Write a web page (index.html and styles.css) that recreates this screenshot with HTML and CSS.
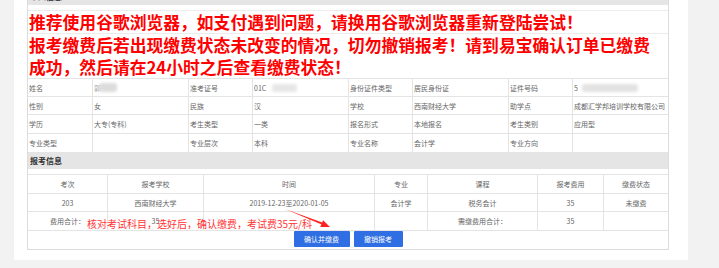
FILE: index.html
```html
<!DOCTYPE html>
<html lang="zh-CN">
<head>
<meta charset="utf-8">
<title>报考信息</title>
<link rel="stylesheet" href="styles.css">
</head>
<body>
<div class="card">
  <div class="box">
    <div class="bar bar--gap">个人信息</div>
    <div class="notice">
      <div class="notice-row notice-row--single">推荐使用谷歌浏览器，如支付遇到问题，请换用谷歌浏览器重新登陆尝试！</div>
      <div class="notice-row notice-row--double">报考缴费后若出现缴费状态未改变的情况，切勿撤销报考！请到易宝确认订单已缴费成功，然后请在24小时之后查看缴费状态！</div>
    </div>
    <div class="info">
      <div class="cell">姓名</div>
      <div class="cell"><span class="faint">郭</span><span class="blur blur--name"></span></div>
      <div class="cell">准考证号</div>
      <div class="cell">01C<span class="blur blur--ticket"></span></div>
      <div class="cell">身份证件类型</div>
      <div class="cell">居民身份证</div>
      <div class="cell">证件号码</div>
      <div class="cell">5<span class="blur blur--id"></span></div>

      <div class="cell">性别</div>
      <div class="cell">女</div>
      <div class="cell">民族</div>
      <div class="cell">汉</div>
      <div class="cell">学校</div>
      <div class="cell">西南财经大学</div>
      <div class="cell">助学点</div>
      <div class="cell">成都汇学邦培训学校有限公司</div>

      <div class="cell">学历</div>
      <div class="cell">大专(专科)</div>
      <div class="cell">考生类型</div>
      <div class="cell">一类</div>
      <div class="cell">报名形式</div>
      <div class="cell">本地报名</div>
      <div class="cell">考生类别</div>
      <div class="cell">应用型</div>

      <div class="cell">专业类型</div>
      <div class="cell"></div>
      <div class="cell">专业层次</div>
      <div class="cell">本科</div>
      <div class="cell">专业名称</div>
      <div class="cell">会计学</div>
      <div class="cell">专业方向</div>
      <div class="cell"></div>
    </div>
    <div class="bar bar--gap">报考信息</div>
    <div class="fee">
      <div class="cell">考次</div>
      <div class="cell">报考学校</div>
      <div class="cell">时间</div>
      <div class="cell">专业</div>
      <div class="cell">课程</div>
      <div class="cell">报考费用</div>
      <div class="cell">缴费状态</div>

      <div class="cell">203</div>
      <div class="cell">西南财经大学</div>
      <div class="cell">2019-12-23至2020-01-05</div>
      <div class="cell">会计学</div>
      <div class="cell">税务会计</div>
      <div class="cell">35</div>
      <div class="cell">未缴费</div>

      <div class="cell">费用合计：</div>
      <div class="cell">35</div>
      <div class="cell"></div>
      <div class="cell"></div>
      <div class="cell">需缴费用合计：</div>
      <div class="cell">35</div>
      <div class="cell"></div>
    </div>
    <div class="actions">
      <button class="btn" type="button">确认并缴费</button>
      <button class="btn" type="button">撤销报考</button>
    </div>
  </div>
  <div class="note">核对考试科目，选好后，确认缴费，考试费35元/科</div>
  <svg class="arrow" width="56" height="28" viewBox="0 0 56 28">
    <path d="M6 5 L43.2 18.6 L42.6 20.4 Z" fill="#f22"/>
    <polygon points="51,23 41.2,23.1 44.1,16.2" fill="#f22"/>
  </svg>
</div>
</body>
</html>
```

FILE: styles.css
```css
* {
  box-sizing: border-box;
}

html,
body {
  margin: 0;
  padding: 0;
}

body {
  background: #f2f2f2;
  font-family: "Noto Sans CJK SC", "Microsoft YaHei", sans-serif;
  color: #666;
  overflow: hidden;
}

.card {
  position: relative;
  width: 674px;
  margin: -12px 0 0 14px;
  padding: 0 19px 10px 13px;
  background: #fff;
}

.box {
  width: 642px;
  border: 1px solid #dcdcdc;
}

.bar {
  height: 16px;
  background: #e5e5e5;
  font-size: 8px;
  font-weight: 700;
  color: #333;
  line-height: 16px;
  padding-left: 2px;
}

.bar--gap {
  margin-bottom: 5px;
}

.notice {
  border-top: 1px solid #ececec;
  color: #f00;
  font-weight: 700;
  font-size: 16.8px;
  line-height: 22px;
}

.notice-row {
  padding: 0 12px 0 1px;
}

.notice-row--single {
  height: 23px;
  border-bottom: 1px solid #ececec;
}

.notice-row--double {
  height: 44px;
}

.info {
  display: grid;
  grid-template-columns: 65px 96px 64px 96px 64px 96px 64px 95px;
  grid-template-rows: 18px 18px 19px 19px;
  border-top: 1px solid #e4e4e4;
  font-size: 7px;
}

.cell {
  display: flex;
  align-items: center;
  padding-left: 1px;
  white-space: nowrap;
  border-right: 1px solid #e4e4e4;
  border-bottom: 1px solid #e4e4e4;
  line-height: 10px;
}

.info .cell:nth-child(8n) {
  border-right: none;
}

.faint {
  color: #aaa;
}

.blur {
  display: inline-block;
  background: #dcdcdc;
  filter: blur(1.5px);
  border-radius: 3px;
}

.blur--name {
  width: 18px;
  height: 9px;
  margin-left: -2px;
}

.blur--ticket {
  width: 25px;
  height: 8px;
  margin-left: 6px;
  background: #e6e6e6;
}

.blur--id {
  width: 56px;
  height: 8px;
  margin-left: 4px;
  background: #e2e2e2;
}

.fee {
  display: grid;
  grid-template-columns: 80px 96px 171px 53px 110px 66px 64px;
  grid-template-rows: 19px 18px 19px;
  border-top: 1px solid #e4e4e4;
  font-size: 7px;
}

.fee .cell {
  justify-content: center;
  padding-left: 0;
}

.fee .cell:nth-child(7n) {
  border-right: none;
}

.actions {
  height: 18px;
  display: flex;
  justify-content: center;
  align-items: flex-start;
  gap: 4px;
}

.btn {
  height: 16px;
  padding: 0 10.5px;
  border: none;
  border-radius: 1px;
  background: #2f6fe3;
  color: #fff;
  font-family: inherit;
  font-size: 7px;
  line-height: 16px;
}

.note {
  position: absolute;
  left: 73px;
  top: 230px;
  font-size: 10px;
  line-height: 12px;
  color: #f33;
  white-space: nowrap;
}

.arrow {
  position: absolute;
  left: 265px;
  top: 216px;
}
```
